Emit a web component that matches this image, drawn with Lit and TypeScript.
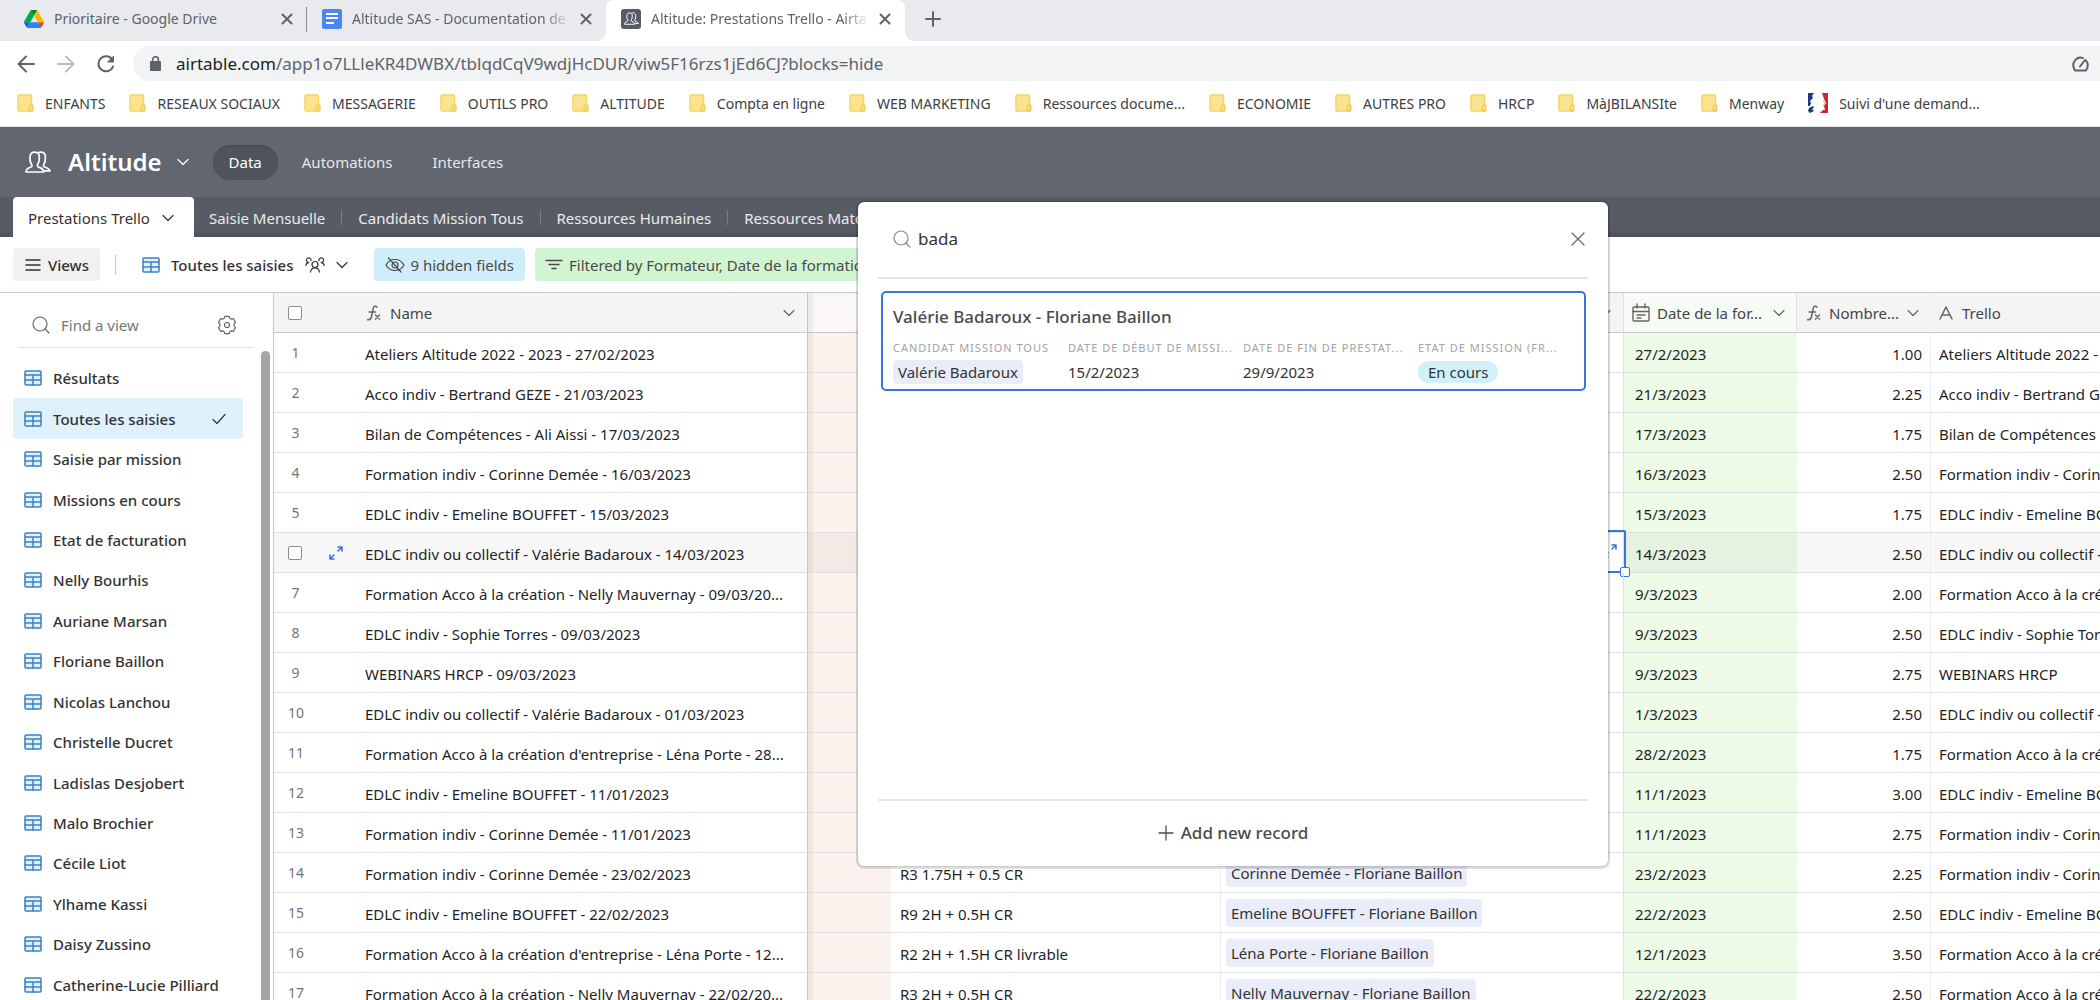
import { LitElement, html, css, svg, nothing } from "lit";
import { customElement, property } from "lit/decorators.js";
import { classMap } from "lit/directives/class-map.js";

/* ---------- Icons ---------- */

const line = (w: number, h: number, body: unknown, sw = "1.2") => html`<svg
  width=${w} height=${h} viewBox="0 0 ${w} ${h}" fill="none" stroke="currentColor"
  stroke-width=${sw} stroke-linecap="round" stroke-linejoin="round" aria-hidden="true">${body}</svg>`;

const chevron = () => line(12, 8, svg`<path d="M1 1.500l5 5 5-5"/>`);
const closeTab = () => line(12, 12, svg`<path d="M1.500 1.500l9 9M10.500 1.500l-9 9"/>`, "2");
const closeThin = () => line(14, 14, svg`<path d="M1 1l12 12M13 1L1 13"/>`);
const magnifier = () => line(18, 18, svg`<circle cx="8" cy="8" r="7"/><path d="M13 13l4 4"/>`);
const gridIcon = () => line(18, 16, svg`<rect x="1" y="1" width="16" height="14" rx="1" fill="#e3f0fb"/><path d="M1 5h16M1 10h16M9 5v10"/>`, "1.500");
const expandIcon = () => line(16, 16, svg`<path d="M10 6l4-4M10 2h4v4M6 10l-4 4M6 14H2v-4"/>`, "1.600");
const fxIcon = () => line(16, 18, svg`<path d="M12 3c-1.600-1.500-3.300-.8-3.700 1.200L6.400 13c-.5 2.200-1.800 3-3.800 2.800M4 8h6.500"/><path d="M10.500 11l4 4M14.500 11l-4 4"/>`, "1.500");
const calendarIcon = () => line(18, 19, svg`<rect x="1" y="4" width="16" height="14" rx="1"/><path d="M1 8.500h16M5 1v4M13 1v4M5 12h8M5 15h4"/>`, "1.400");
const textIcon = () => line(14, 14, svg`<path d="M1 13L7 1l6 12M3.200 9h7.600"/>`, "1.500");
const checkIcon = () => line(14, 12, svg`<path d="M1 6.500L5 10.500 13 1.500"/>`);
const menuIcon = () => line(16, 14, svg`<path d="M1 2h14M1 7h14M1 12h14"/>`, "1.500");
const filterIcon = () => line(18, 12, svg`<path d="M1 1.500h16M4 5.500h10M7 9.500h4"/>`, "1.500");
const hiddenIcon = () => line(20, 16, svg`<path d="M3.500 1l12.500 14M1 8c2-3.500 5-5.500 9-5.500S17 4.500 19 8c-2 3.500-5 5.500-9 5.500S3 11.500 1 8z"/><circle cx="10" cy="8" r="3"/>`);
const gearIcon = () => line(20, 20, svg`<circle cx="10" cy="10" r="2.500"/><path d="M7.300 3.200l.5-1.900h4.400l.5 1.900 1.700 1 2-.5 2.100 3.700-1.400 1.500v2.200l1.400 1.500-2.100 3.700-2-.5-1.700 1-.5 1.900H7.800l-.5-1.900-1.700-1-2 .5-2.100-3.700 1.400-1.500V8.900L1.500 7.400l2.100-3.700 2 .5z"/>`);
const peopleIcon = () => line(20, 16, svg`<circle cx="10" cy="7.500" r="3"/><path d="M5.500 15c.5-2.800 2.200-4.200 4.500-4.200s4 1.400 4.500 4.200M1 8.500C1 7 2 5.800 3.800 5.400M19 8.500c0-1.500-1-2.700-2.800-3.100M6 3.600A2.300 2.300 0 1 0 3.500 5.500M14 3.600a2.300 2.300 0 1 1 2.500 1.900"/>`);
const plusIcon = (sw = "1.300") => line(16, 16, svg`<path d="M8 1v14M1 8h14"/>`, sw);
const profiles = (w: number, h: number) => html`<svg width=${w} height=${h} viewBox="0 0 26 22" fill="none"
  stroke="#fff" stroke-width="1.700" stroke-linejoin="round" aria-hidden="true">
  <path d="M1 21c0-3 1.500-4 5-5 1-.4 1.200-1.400.6-2.600C5 11.500 4.800 9.500 5 6.200 5.200 3 6.800 1.200 9.600 1.200c3.200 0 4.800 2 4.800 5.200 0 3-.4 5-1.700 7-.7 1.300-.3 2.200.8 2.700 3.500 1.200 5 2 5 4.900z"/>
  <path d="M13 2c.8-.6 1.700-.8 2.800-.8 3 0 4.500 2 4.600 5 .1 3.200-.3 5.200-1.600 7.200-.6 1.200-.3 2.200.8 2.600 3.400 1.200 5 1.600 5.400 3.800h-6.300"/></svg>`;
const driveIcon = () => html`<svg width="20" height="18" viewBox="0 0 87 78" aria-hidden="true">
  <path fill="#0066da" d="M6.600 66.850l3.850 6.650c.8 1.400 1.950 2.500 3.300 3.300L27.500 53H0c0 1.550.4 3.100 1.200 4.500z"/>
  <path fill="#00ac47" d="M43.650 25L29.900 1.200c-1.350.8-2.500 1.900-3.300 3.300L1.200 48.500A9 9 0 0 0 0 53h27.500z"/>
  <path fill="#ea4335" d="M73.550 76.800c1.350-.8 2.500-1.900 3.300-3.300l1.600-2.750L86.100 57.500c.8-1.400 1.200-2.950 1.200-4.500H59.800l5.850 11.500z"/>
  <path fill="#00832d" d="M43.650 25L57.400 1.200C56.050.4 54.500 0 52.900 0H34.400c-1.600 0-3.150.45-4.500 1.200z"/>
  <path fill="#2684fc" d="M59.800 53H27.500L13.750 76.800c1.350.8 2.900 1.200 4.500 1.200h50.800c1.600 0 3.150-.45 4.500-1.200z"/>
  <path fill="#ffba00" d="M73.400 26.500L60.700 4.500c-.8-1.400-1.950-2.500-3.300-3.300L43.650 25 59.800 53h27.450c0-1.550-.4-3.100-1.200-4.500z"/></svg>`;
const docIcon = () => html`<svg width="20" height="20" viewBox="0 0 20 20" aria-hidden="true">
  <rect width="20" height="20" rx="2" fill="#4c86f4"/><path d="M4 5h12M4 9h12M4 14h8" stroke="#fff" stroke-width="2"/></svg>`;
const airtableIcon = () => html`<span class="favicon">${profiles(15, 13)}</span>`;
const folderIcon = () => html`<svg width="17" height="18" viewBox="0 0 17 18" aria-hidden="true">
  <rect x="1" y="1" width="13.500" height="16" rx="1" fill="#fbe491" stroke="#f5d560" stroke-width="1.500"/>
  <path d="M12 17.200v-4.500l1.300-1.700H16v6.200z" fill="#f8dc74" stroke="#eec848"/></svg>`;
const republicIcon = () => html`<svg width="20" height="20" viewBox="0 0 20 20" aria-hidden="true">
  <path fill="#1b3a86" d="M0 0h6L4 3l1 2-3 3 1 2-1 3H0zM1 15l4-2 1 2-2 1 2 2-4 2-2-2z"/>
  <path fill="#cf2330" d="M14 0h6v20h-8l3-3h2l-1-4 2-3-2-4z"/>
  <path d="M15 7l2 3-2 3" fill="none" stroke="#bbb"/></svg>`;

/* ---------- Data ---------- */

const BOOKMARKS = ["ENFANTS", "RESEAUX SOCIAUX", "MESSAGERIE", "OUTILS PRO", "ALTITUDE", "Compta en ligne",
  "WEB MARKETING", "Ressources docume...", "ECONOMIE", "AUTRES PRO", "HRCP", "MàJBILANSIte", "Menway"];

const VIEWS = ["Résultats", "Toutes les saisies", "Saisie par mission", "Missions en cours", "Etat de facturation",
  "Nelly Bourhis", "Auriane Marsan", "Floriane Baillon", "Nicolas Lanchou", "Christelle Ducret", "Ladislas Desjobert",
  "Malo Brochier", "Cécile Liot", "Ylhame Kassi", "Daisy Zussino", "Catherine-Lucie Pilliard"];

interface Row { name: string; date: string; hours: string; note?: string; link?: string; active?: boolean }

const ROWS: Row[] = [
  { name: "Ateliers Altitude 2022 - 2023 - 27/02/2023", date: "27/2/2023", hours: "1.00" },
  { name: "Acco indiv - Bertrand GEZE - 21/03/2023", date: "21/3/2023", hours: "2.25" },
  { name: "Bilan de Compétences - Ali Aissi - 17/03/2023", date: "17/3/2023", hours: "1.75" },
  { name: "Formation indiv - Corinne Demée - 16/03/2023", date: "16/3/2023", hours: "2.50" },
  { name: "EDLC indiv - Emeline BOUFFET - 15/03/2023", date: "15/3/2023", hours: "1.75" },
  { name: "EDLC indiv ou collectif - Valérie Badaroux - 14/03/2023", date: "14/3/2023", hours: "2.50", active: true },
  { name: "Formation Acco à la création - Nelly Mauvernay - 09/03/20...", date: "9/3/2023", hours: "2.00" },
  { name: "EDLC indiv - Sophie Torres - 09/03/2023", date: "9/3/2023", hours: "2.50" },
  { name: "WEBINARS HRCP - 09/03/2023", date: "9/3/2023", hours: "2.75" },
  { name: "EDLC indiv ou collectif - Valérie Badaroux - 01/03/2023", date: "1/3/2023", hours: "2.50" },
  { name: "Formation Acco à la création d'entreprise - Léna Porte - 28...", date: "28/2/2023", hours: "1.75" },
  { name: "EDLC indiv - Emeline BOUFFET - 11/01/2023", date: "11/1/2023", hours: "3.00" },
  { name: "Formation indiv - Corinne Demée - 11/01/2023", date: "11/1/2023", hours: "2.75" },
  { name: "Formation indiv - Corinne Demée - 23/02/2023", date: "23/2/2023", hours: "2.25", note: "R3 1.75H + 0.5 CR", link: "Corinne Demée - Floriane Baillon" },
  { name: "EDLC indiv - Emeline BOUFFET - 22/02/2023", date: "22/2/2023", hours: "2.50", note: "R9 2H + 0.5H CR", link: "Emeline BOUFFET - Floriane Baillon" },
  { name: "Formation Acco à la création d'entreprise - Léna Porte - 12...", date: "12/1/2023", hours: "3.50", note: "R2 2H + 1.5H CR livrable", link: "Léna Porte - Floriane Baillon" },
  { name: "Formation Acco à la création - Nelly Mauvernay - 22/02/20...", date: "22/2/2023", hours: "2.50", note: "R3 2H + 0.5H CR", link: "Nelly Mauvernay - Floriane Baillon" },
];

const trelloText = (name: string) => (name.startsWith("WEBINARS") ? "WEBINARS HRCP" : name);

const base = css`
  :host, *, *::before, *::after { box-sizing: border-box; }
  svg { display: block; flex: none; }
  button { font: inherit; color: inherit; background: none; border: 0; padding: 0; margin: 0; display: flex; align-items: center; cursor: pointer; }
  input { font: inherit; color: inherit; margin: 0; }
  a { color: inherit; text-decoration: none; }
`;

/* ---------- Browser chrome ---------- */

@customElement("browser-chrome")
class BrowserChrome extends LitElement {
  static styles = [base, css`
    :host { display: block; font-size: 14px; color: #5f6368; background: #fff; height: 127px; border-bottom: 1px solid #dfe1e5; }
    .strip { display: flex; height: 41px; background: #e8eaed; padding-left: 9px; overflow: hidden; }
    .tab { display: flex; align-items: center; width: 299px; padding: 0 14px 4px 15px; gap: 10px; position: relative; }
    .tab:first-child { width: 298px; }
    .tab.ruled::after { content: ""; position: absolute; right: 0; top: 7px; height: 25px; width: 1px; background: #85898e; }
    .tab.active { background: #fff; border-radius: 8px 8px 0 0; }
    .tab.active::before, .tab.active::after { content: ""; position: absolute; bottom: 0; width: 10px; height: 10px; }
    .tab.active::before { left: -10px; background: radial-gradient(circle at 0 0, transparent 10px, #fff 10px); }
    .tab.active::after { right: -10px; background: radial-gradient(circle at 100% 0, transparent 10px, #fff 10px); }
    .title { flex: 1; min-width: 0; overflow: hidden; white-space: nowrap; text-align: left; }
    .title.faded { mask-image: linear-gradient(90deg, #000 88%, transparent); -webkit-mask-image: linear-gradient(90deg, #000 88%, transparent); }
    .favicon { width: 20px; height: 20px; background: #565b66; border-radius: 3px; display: flex; align-items: center; justify-content: center; flex: none; }
    .new { margin: 0 0 4px 20px; }
    .nav { display: flex; align-items: center; height: 45px; gap: 18px; padding-left: 17px; }
    .moves { display: flex; gap: 22px; }
    .forward { color: #b9bbbe; }
    .pill { flex: 1; height: 35px; border-radius: 18px 0 0 18px; background: #f1f3f4; display: flex; align-items: center; padding: 0 11px 0 17px; gap: 15px; }
    .url { flex: 1; font-size: 17px; white-space: nowrap; }
    .url b { font-weight: 400; color: #202124; }
    .marks { display: flex; height: 36px; align-items: center; padding: 0 0 2px 17px; gap: 24px; color: #3c4043; }
    .mark { display: flex; align-items: center; gap: 11px; white-space: nowrap; }
  `];

  render() {
    return html`
      <div class="strip">
        <div class="tab ruled">${driveIcon()}<span class="title">Prioritaire - Google Drive</span><button aria-label="Close tab">${closeTab()}</button></div>
        <div class="tab">${docIcon()}<span class="title faded">Altitude SAS - Documentation de</span><button aria-label="Close tab">${closeTab()}</button></div>
        <div class="tab active">${airtableIcon()}<span class="title faded">Altitude: Prestations Trello - Airta</span><button aria-label="Close tab">${closeTab()}</button></div>
        <button class="new" aria-label="New tab">${plusIcon("2")}</button>
      </div>
      <div class="nav">
        <div class="moves">
          <button aria-label="Back">${line(18, 18, svg`<path d="M17 9H2M9 1.500L1.500 9 9 16.500"/>`, "2")}</button>
          <button class="forward" aria-label="Forward">${line(18, 18, svg`<path d="M1 9h15M9 1.500L16.500 9 9 16.500"/>`, "2")}</button>
          <button aria-label="Reload">${line(18, 18, svg`<path d="M15.500 5A7.500 7.500 0 1 0 16 11.500"/><path d="M16.500 1.500v5.500h-5.500z" fill="currentColor" stroke-width="1"/>`, "2")}</button>
        </div>
        <div class="pill">
          <svg width="11" height="16" viewBox="0 0 11 16" aria-hidden="true"><rect y="5" width="11" height="10" rx="1" fill="#5f6368"/><path d="M2.700 6V3.500a2.800 2.800 0 0 1 5.600 0V6" fill="none" stroke="#5f6368" stroke-width="1.600"/></svg>
          <span class="url"><b>airtable.com</b>/app1o7LLleKR4DWBX/tblqdCqV9wdjHcDUR/viw5F16rzs1jEd6CJ?blocks=hide</span>
          ${line(17, 16, svg`<path d="M3 14.500h11c2.500-4 2-7.500 0-10M11 2.200C8 .8 5 1.800 3 4.500c-2 2.500-2.500 6 0 10M8 10.500L13 4"/>`, "2")}
        </div>
      </div>
      <div class="marks">
        ${BOOKMARKS.map((b) => html`<a class="mark" href="#">${folderIcon()}${b}</a>`)}
        <a class="mark" href="#">${republicIcon()}Suivi d'une demand...</a>
      </div>`;
  }
}

/* ---------- Base header and table tabs ---------- */

@customElement("base-header")
class BaseHeader extends LitElement {
  static styles = [base, css`
    :host { display: block; color: #fff; font-size: 15px; }
    .top { display: flex; align-items: center; height: 70px; background: #616670; padding: 0 25px; }
    .name { font-size: 24px; font-weight: 600; margin: 0 15px 0 17px; line-height: 32px; }
    .modes { display: flex; margin-left: 24px; gap: 8px; color: #e6e7e9; }
    .modes button { height: 35px; padding: 0 16px; border-radius: 18px; }
    .modes button.on { background: #4f535c; color: #fff; box-shadow: inset 0 1px 2px #43474f; }
    .tables { display: flex; height: 40px; background: linear-gradient(#575b64 32px, #4d5159 40px); padding-left: 13px; color: #ececee; }
    .tables button { padding: 2px 0 0; white-space: nowrap; align-items: center; }
    .tables .current { background: #fff; color: #333; border-radius: 4px 4px 0 0; padding: 2px 20px 0 15px; gap: 12px; margin-right: 15px; }
    .tables i { width: 1px; height: 15px; background: #797d85; margin: 13px 16px 0; }
  `];

  render() {
    const others = ["Saisie Mensuelle", "Candidats Mission Tous", "Ressources Humaines", "Ressources Maté"];
    return html`
      <div class="top">
        ${profiles(26, 22)}<span class="name">Altitude</span><button aria-label="Base menu">${chevron()}</button>
        <nav class="modes"><button class="on">Data</button><button>Automations</button><button>Interfaces</button></nav>
      </div>
      <nav class="tables">
        <button class="current">Prestations Trello ${chevron()}</button>
        ${others.map((t, n) => html`${n ? html`<i></i>` : nothing}<button>${t}</button>`)}
      </nav>`;
  }
}

/* ---------- View toolbar ---------- */

@customElement("view-toolbar")
class ViewToolbar extends LitElement {
  static styles = [base, css`
    :host { display: flex; align-items: center; height: 56px; padding: 0 13px; background: #fff; border-bottom: 1px solid #c8c8c8; font-size: 15px; color: #4a4a4a; }
    button { height: 33px; border-radius: 4px; padding: 0 10px; gap: 7px; white-space: nowrap; flex: none; }
    .views { background: #f1f1f1; padding: 0 11px 0 12px; color: #333; font-weight: 500; }
    .rule { width: 1px; height: 20px; background: #c4c4c4; margin: 0 16px 0 15px; }
    .current { gap: 11px; color: #333; font-weight: 500; padding-right: 26px; }
    .current svg:first-child { color: #3a82c4; }
    .hidden { background: #d0edfa; margin-right: 10px; gap: 6px; padding: 0 11px; }
    .filter { background: #d1f5d1; gap: 6px; }
  `];

  render() {
    return html`
      <button class="views">${menuIcon()}Views</button><span class="rule"></span>
      <button class="current">${gridIcon()}Toutes les saisies ${peopleIcon()} ${chevron()}</button>
      <button class="hidden">${hiddenIcon()}9 hidden fields</button>
      <button class="filter">${filterIcon()}Filtered by Formateur, Date de la formation</button>`;
  }
}

/* ---------- Sidebar ---------- */

@customElement("views-sidebar")
class ViewsSidebar extends LitElement {
  static styles = [base, css`
    :host { display: flex; background: #fff; font-size: 15px; overflow: hidden; border-right: 1px solid #c8c8c8; }
    .body { flex: 1; min-width: 0; display: flex; flex-direction: column; padding: 0 18px 0 13px; }
    .find { display: flex; align-items: center; gap: 11px; height: 55px; margin: 0 -10px 0 5px; padding: 10px 16px 0 14px; border-bottom: 1px solid #e0e0e0; color: #666; }
    .find input { flex: 1; min-width: 0; border: 0; outline: 0; padding: 0; background: none; }
    .find input::placeholder { color: #767676; opacity: 1; }
    ul { list-style: none; padding: 0; margin: 10px 0 -5px; flex: 1; display: grid; grid-auto-rows: minmax(0, 1fr); }
    li { display: flex; }
    li button { flex: 1; gap: 11px; padding: 0 17px 0 11px; border-radius: 4px; color: #333; font-weight: 500; white-space: nowrap; }
    li button svg:first-child { color: #3a82c4; }
    li span { flex: 1; text-align: left; }
    .on { background: #dff1fb; }
    .track { width: 12px; padding: 58px 3px 0 0; display: flex; }
    .thumb { flex: 1; background: #a6a6a6; border-radius: 5px 5px 0 0; }
  `];

  render() {
    return html`
      <div class="body">
        <div class="find">${magnifier()}<input aria-label="Find a view" placeholder="Find a view" /><button aria-label="Settings">${gearIcon()}</button></div>
        <ul>${VIEWS.map((v, n) => html`<li><button class=${classMap({ on: n === 1 })}>${gridIcon()}<span>${v}</span>${n === 1 ? checkIcon() : nothing}</button></li>`)}</ul>
      </div>
      <div class="track"><div class="thumb"></div></div>`;
  }
}

/* ---------- Record grid ---------- */

@customElement("record-grid")
class RecordGrid extends LitElement {
  static styles = [base, css`
    :host { display: block; overflow: hidden; font-size: 15px; color: #1f1f1f; background: #fff; }
    table { table-layout: fixed; width: 100%; border-collapse: separate; border-spacing: 0; }
    .c-num { width: 82px; } .c-name { width: 452px; } .c-tint { width: 83px; } .c-note { width: 330px; }
    .c-link { width: 403px; } .c-date { width: 173px; } .c-hours { width: 134px; }
    th, td { height: 40px; padding: 0; border-bottom: 1px solid #dcdfe3; overflow: hidden; white-space: nowrap; text-align: left; font-weight: 400; }
    th { background: #f4f4f4; color: #444; border-bottom-color: #c8c8c8; }
    .num { padding-left: 14px; }
    .slot { display: flex; align-items: center; gap: 26px; }
    .index { width: 15px; text-align: center; font-size: 14px; color: #757575; }
    input { appearance: none; width: 14px; height: 14px; border: 1px solid #8d8d8d; border-radius: 2px; background: #fff; display: block; flex: none; }
    .open { color: #3b73e0; }
    .name { padding-left: 9px; border-right: 1px solid #c8c8c8; }
    .tint { background: linear-gradient(90deg, rgba(0,0,0,.05) 5px, transparent 5px) #fcf2ed; }
    th.tint { background-color: #fcf7f7; }
    .note { padding-left: 9px; border-right: 1px solid #eceef0; }
    .link { padding-left: 5px; border-right: 1px solid #dde0e3; overflow: visible; position: relative; }
    .chip { display: inline-block; padding: 0 5px; line-height: 28px; background: #e9ecf9; border-radius: 4px; color: #333; }
    .date { padding-left: 11px; background: #edfbe6; }
    th.date { background: #f6fbf5; padding-left: 8px; border-right: 1px solid #dde0e3; }
    .hours { text-align: right; padding-right: 8px; border-right: 1px solid #eceef0; }
    th.hours { padding: 0 12px 0 8px; }
    .trello { padding-left: 8px; }
    .head { display: flex; align-items: center; }
    .head span { flex: 1; text-align: left; }
    .head > svg { color: #666; }
    .head.wide { gap: 9px; padding-right: 12px; }
    .head.tight { gap: 7px; padding-right: 11px; }
    th.hours .head { padding-right: 0; gap: 8px; }
    .active td { background-color: #f7f7f7; }
    .active .tint { background-color: #f4eae5; }
    .active .date { background-color: #e6f2e0; }
    .active .link { background: #fff; }
    .selection { position: absolute; inset: -3px -3px -1px 0; border: 2px solid #3b73e0; border-radius: 2px; }
    .selection svg { position: absolute; right: 6px; top: 11px; color: #3b73e0; }
    .handle { position: absolute; right: -6px; bottom: -6px; width: 10px; height: 10px; background: #fff; border: 1px solid #3b73e0; border-radius: 2px; }
    td.trello, td.hours, td.date, td.note, td.name { padding-top: 3px; }
  `];

  render() {
    return html`<table>
      <colgroup><col class="c-num"><col class="c-name"><col class="c-tint"><col class="c-note"><col class="c-link"><col class="c-date"><col class="c-hours"><col></colgroup>
      <thead><tr>
        <th class="num"><input type="checkbox" aria-label="Select all records"></th>
        <th class="name"><div class="head wide">${fxIcon()}<span>Name</span>${chevron()}</div></th>
        <th class="tint"></th><th class="note"></th>
        <th class="link"><div class="head wide"><span></span>${chevron()}</div></th>
        <th class="date"><div class="head tight">${calendarIcon()}<span>Date de la for...</span>${chevron()}</div></th>
        <th class="hours"><div class="head wide">${fxIcon()}<span>Nombre...</span>${chevron()}</div></th>
        <th class="trello"><div class="head wide">${textIcon()}<span>Trello</span></div></th>
      </tr></thead>
      <tbody>${ROWS.map((r, n) => html`<tr class=${classMap({ active: !!r.active })}>
        <td class="num"><div class="slot">${r.active
          ? html`<input type="checkbox" aria-label="Select record"><button class="open" aria-label="Expand record">${expandIcon()}</button>`
          : html`<span class="index">${n + 1}</span>`}</div></td>
        <td class="name">${r.name}</td>
        <td class="tint"></td>
        <td class="note">${r.note ?? nothing}</td>
        <td class="link">${r.link ? html`<span class="chip">${r.link}</span>` : nothing}${r.active
          ? html`<div class="selection">${expandIcon()}<span class="handle"></span></div>` : nothing}</td>
        <td class="date">${r.date}</td>
        <td class="hours">${r.hours}</td>
        <td class="trello">${trelloText(r.name)}</td>
      </tr>`)}</tbody></table>`;
  }
}

/* ---------- Record picker ---------- */

@customElement("record-picker")
class RecordPicker extends LitElement {
  @property() query = "bada";

  static styles = [base, css`
    :host { display: flex; flex-direction: column; background: #fff; border-radius: 6px; padding: 0 20px; color: #333; font-size: 15px; box-shadow: 0 1px 0 2px rgba(0,0,0,.1), 0 0 3px rgba(0,0,0,.3); }
    .search { display: flex; align-items: center; gap: 7px; height: 77px; padding: 0 3px 2px 15px; border-bottom: 2px solid #e5e5e5; font-size: 17px; }
    .search > svg { color: #888; }
    .search input { flex: 1; min-width: 0; border: 0; outline: 0; padding: 0; background: none; }
    .search button { color: #666; }
    .results { flex: 1; padding: 12px 2px 0 3px; }
    .card { border: 2px solid #3b73e0; border-radius: 5px; height: 100px; padding: 12px 10px 0; }
    h3 { margin: 0 0 11px; font-size: 17px; line-height: 24px; font-weight: 500; color: #4b4b4b; }
    dl { display: flex; margin: 0; }
    dl > div { flex: none; width: 175px; white-space: nowrap; }
    dt { font-size: 11px; line-height: 16px; letter-spacing: 1px; color: #a3a3a3; }
    dd { margin: 4px 0 0; line-height: 24px; height: 24px; display: flex; align-items: center; }
    .chip { background: #e9ecf9; border-radius: 4px; padding: 0 5px; }
    .status { background: #d0f0fa; border-radius: 12px; padding: 0 10px; line-height: 22px; }
    .add { border-top: 2px solid #e5e5e5; height: 67px; padding-bottom: 2px; justify-content: center; gap: 7px; font-size: 17px; font-weight: 500; color: #4b4b4b; }
  `];

  render() {
    return html`
      <div class="search">${magnifier()}<input aria-label="Find a record" .value=${this.query}><button aria-label="Close">${closeThin()}</button></div>
      <div class="results"><article class="card">
        <h3>Valérie Badaroux - Floriane Baillon</h3>
        <dl>
          <div><dt>CANDIDAT MISSION TOUS</dt><dd><span class="chip">Valérie Badaroux</span></dd></div>
          <div><dt>DATE DE DÉBUT DE MISSI...</dt><dd>15/2/2023</dd></div>
          <div><dt>DATE DE FIN DE PRESTAT...</dt><dd>29/9/2023</dd></div>
          <div><dt>ETAT DE MISSION (FR...</dt><dd><span class="status">En cours</span></dd></div>
        </dl>
      </article></div>
      <button class="add">${plusIcon()}Add new record</button>`;
  }
}

@customElement("app-root")
class AppRoot extends LitElement {
  static styles = css`
    :host { display: flex; flex-direction: column; height: 100vh; overflow: hidden; position: relative; font-family: "Noto Sans", "Open Sans", sans-serif; }
    main { flex: 1; min-height: 0; display: grid; grid-template-columns: 274px minmax(0, 1fr); grid-template-rows: minmax(0, 1fr); }
    record-picker { position: absolute; left: 858px; top: 202px; width: 750px; height: 664px; z-index: 2; }
  `;

  render() {
    return html`
      <browser-chrome></browser-chrome>
      <base-header></base-header>
      <view-toolbar></view-toolbar>
      <main><views-sidebar></views-sidebar><record-grid></record-grid></main>
      <record-picker></record-picker>`;
  }
}
